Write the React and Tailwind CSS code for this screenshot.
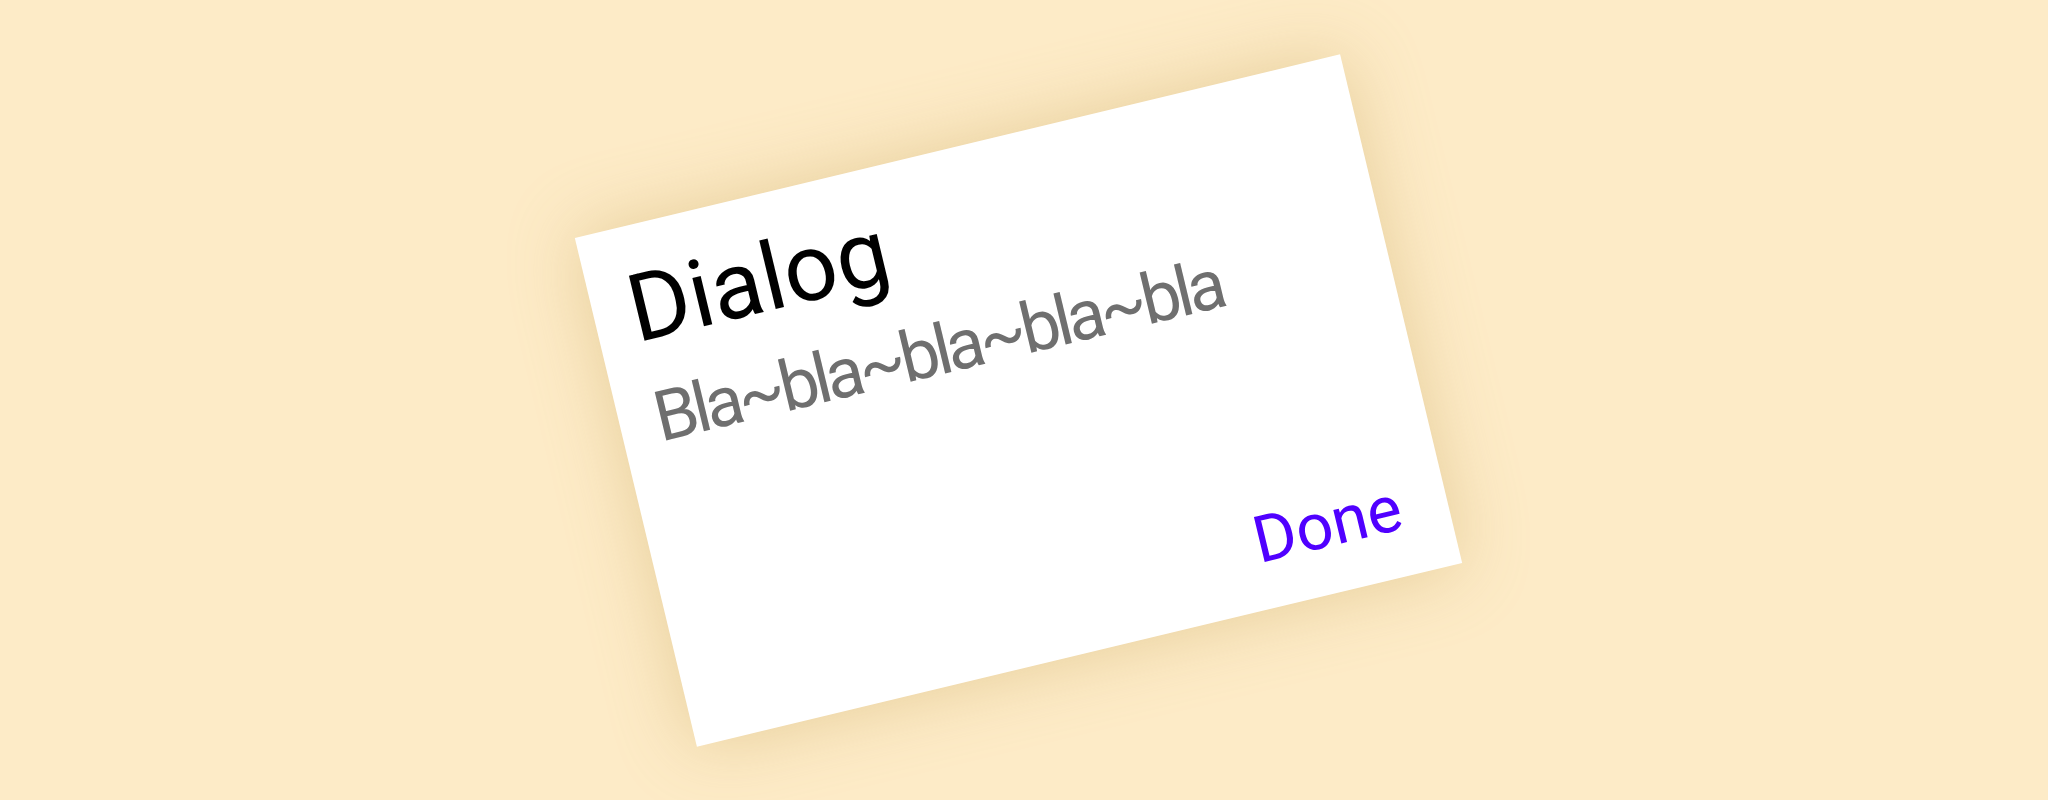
import React from 'react';

// Tilted dialog card on a cream backdrop
export default function App() {
  return (
    <div className="flex h-[800px] w-full items-center justify-center overflow-hidden bg-[#fdebc7]">
      <div
        className="flex h-[523px] w-[787px] -translate-x-[6px] rotate-[-13.5deg] flex-col bg-white px-[36px] pt-[37px] pb-[36px] shadow-[0_0_70px_rgba(205,170,100,0.45)]"
        style={{ fontFamily: 'Roboto, "Open Sans", sans-serif' }}
      >
        <h1 className="text-[94px] leading-none font-normal text-black">Dialog</h1>
        <p className="mt-[28px] text-[70px] leading-none tracking-[-4.5px] text-[#6f6f6f]">Bla~bla~bla~bla~bla</p>
        <div className="mt-auto flex justify-end pr-[11px]">
          <button className="text-[65px] leading-none text-[#5000ff]">Done</button>
        </div>
      </div>
    </div>
  );
}
